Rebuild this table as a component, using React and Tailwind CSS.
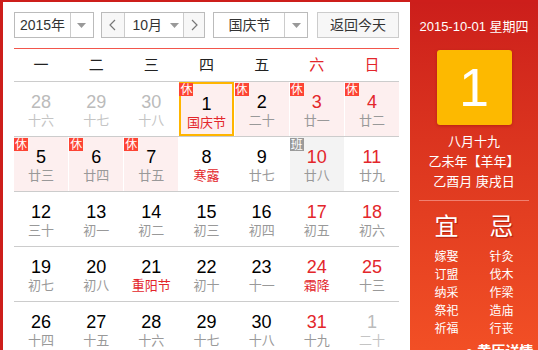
import React from "react";

const FONT = { fontFamily: '"Liberation Sans", Arial, "Noto Sans CJK SC", sans-serif' };

// d: day, l: lunar/holiday text, o: other month, w: weekend, h: holiday name, b: badge
const rows = [
  [
    { d: 28, l: "十六", o: true },
    { d: 29, l: "十七", o: true },
    { d: 30, l: "十八", o: true },
    { d: 1, l: "国庆节", h: true, b: "休", sel: true },
    { d: 2, l: "二十", b: "休" },
    { d: 3, l: "廿一", b: "休", w: true },
    { d: 4, l: "廿二", b: "休", w: true },
  ],
  [
    { d: 5, l: "廿三", b: "休" },
    { d: 6, l: "廿四", b: "休" },
    { d: 7, l: "廿五", b: "休" },
    { d: 8, l: "寒露", h: true },
    { d: 9, l: "廿七" },
    { d: 10, l: "廿八", b: "班", w: true },
    { d: 11, l: "廿九", w: true },
  ],
  [
    { d: 12, l: "三十" },
    { d: 13, l: "初一" },
    { d: 14, l: "初二" },
    { d: 15, l: "初三" },
    { d: 16, l: "初四" },
    { d: 17, l: "初五", w: true },
    { d: 18, l: "初六", w: true },
  ],
  [
    { d: 19, l: "初七" },
    { d: 20, l: "初八" },
    { d: 21, l: "重阳节", h: true },
    { d: 22, l: "初十" },
    { d: 23, l: "十一" },
    { d: 24, l: "霜降", h: true, w: true },
    { d: 25, l: "十三", w: true },
  ],
  [
    { d: 26, l: "十四" },
    { d: 27, l: "十五" },
    { d: 28, l: "十六" },
    { d: 29, l: "十七" },
    { d: 30, l: "十八" },
    { d: 31, l: "十九", w: true },
    { d: 1, l: "二十", o: true },
  ],
];

const weekdays = ["一", "二", "三", "四", "五", "六", "日"];
const yi = ["嫁娶", "订盟", "纳采", "祭祀", "祈福"];
const ji = ["针灸", "伐木", "作梁", "造庙", "行丧"];

const Caret = () => (
  <svg width="9" height="5" viewBox="0 0 9 5">
    <path d="M0 0h9L4.5 5z" fill="#999" />
  </svg>
);

const Chevron = ({ left }) => (
  <svg width="7" height="12" viewBox="0 0 7 12">
    <path
      d={left ? "M6 1L1 6l5 5" : "M1 1l5 5-5 5"}
      fill="none"
      stroke="#777"
      strokeWidth="1.2"
    />
  </svg>
);

const Cell = ({ c }) => {
  let bg = "";
  if (c.b === "休") bg = "bg-[#fdefef]";
  if (c.b === "班") bg = "bg-[#f3f3f3]";

  let numColor = "text-black";
  if (c.w) numColor = "text-[#e3262b]";
  if (c.o) numColor = "text-[#bbbbbb]";

  let lunarColor = "text-[#999999]";
  if (c.h) lunarColor = "text-[#e3262b]";
  if (c.o) lunarColor = "text-[#c4c4c4]";

  return (
    <div
      className={`relative h-[54px] flex flex-col items-center pt-[10px] ${bg} ${
        c.sel ? "border-2 border-[#ffb500] pt-[8px]" : ""
      }`}
    >
      {c.b && (
        <span
          className={`absolute ${c.sel ? "-top-[1px] -left-[2px]" : "top-[1px] left-0"} w-[14px] h-[13px] flex items-center justify-center text-[12px] leading-none text-white ${
            c.b === "休" ? "bg-[#fd4434]" : "bg-[#9a9a9a]"
          }`}
        >
          {c.b}
        </span>
      )}
      <span className={`text-[18px] leading-[20px] ${numColor}`}>{c.d}</span>
      <span className={`text-[13px] leading-[18px] ${lunarColor}`}>{c.l}</span>
    </div>
  );
};

export default function App() {
  return (
    <div
      className="w-[538px] h-[350px] overflow-hidden flex bg-[#cd1e1b] pl-[3px] pt-[2px]"
      style={FONT}
    >
      {/* 左侧日历 */}
      <div className="w-[407px] shrink-0 bg-white px-[11px] pt-[10px]">
        {/* 控制栏 */}
        <div className="flex items-center h-[26px] text-[14px] text-[#333]">
          <div className="w-[80px] h-[26px] flex border border-[#bbbbbb]">
            <span className="w-[55px] flex items-center justify-center">2015年</span>
            <span className="flex-1 border-l border-[#cccccc] flex items-center justify-center">
              <Caret />
            </span>
          </div>
          <div className="ml-[7px] w-[105px] h-[26px] flex border border-[#bbbbbb]">
            <span className="w-[22px] bg-[#f7f7f7] flex items-center justify-center">
              <Chevron left />
            </span>
            <span className="w-[60px] border-x border-[#cccccc] flex items-center justify-center gap-[8px] pl-[4px]">
              10月 <Caret />
            </span>
            <span className="flex-1 bg-[#f7f7f7] flex items-center justify-center">
              <Chevron />
            </span>
          </div>
          <div className="ml-[8px] w-[95px] h-[26px] flex border border-[#bbbbbb]">
            <span className="w-[70px] flex items-center justify-center">国庆节</span>
            <span className="flex-1 border-l border-[#cccccc] flex items-center justify-center">
              <Caret />
            </span>
          </div>
          <button className="ml-[9px] w-[82px] h-[26px] border border-[#cccccc] bg-[#f7f7f7] text-[14px] text-[#333]">
            返回今天
          </button>
        </div>

        {/* 星期 */}
        <div className="mt-[10px] border-t border-[#f2564c] grid grid-cols-7 gap-x-px h-[33px] items-center text-[15px] text-[#222]">
          {weekdays.map((w, i) => (
            <span key={w} className={`text-center ${i > 4 ? "text-[#e3262b]" : ""}`}>
              {w}
            </span>
          ))}
        </div>

        {/* 日期 */}
        {rows.map((row, ri) => (
          <div key={ri} className="border-t border-[#cccccc] grid grid-cols-7 gap-x-px">
            {row.map((c, ci) => (
              <Cell key={ci} c={c} />
            ))}
          </div>
        ))}
      </div>

      {/* 右侧黄历 */}
      <div className="w-[128px] shrink-0 bg-gradient-to-b from-[#cc1e1b] to-[#f24f25] text-white flex flex-col items-center pt-[15px] [&>*]:shrink-0">
        <div className="text-[13px] leading-[20px]">2015-10-01 星期四</div>
        <div className="mt-[13px] w-[75px] h-[75px] rounded-[3px] bg-[#fdb900] shadow-[0_1px_3px_rgba(120,0,0,0.35)] flex items-center justify-center text-[54px] leading-none pb-[2px]">
          1
        </div>
        <div className="mt-[7px] text-[13px] leading-[20px] text-center">
          <div>八月十九</div>
          <div>乙未年【羊年】</div>
          <div>乙酉月 庚戌日</div>
        </div>
        <div className="mt-[8px] w-[110px] border-t border-[#f08070]" />
        <div className="w-[110px] flex">
          {[["宜", yi], ["忌", ji]].map(([t, list]) => (
            <div key={t} className="w-1/2 flex flex-col items-center">
              <div className="mt-[12px] text-[24px] leading-[28px] [text-shadow:1px_1px_1px_rgba(120,0,0,0.5)]">
                {t}
              </div>
              <div className="mt-[7px] text-[12px] leading-[18px] text-center">
                {list.map((x) => (
                  <div key={x}>{x}</div>
                ))}
              </div>
            </div>
          ))}
        </div>
        <div className="mt-[4px] self-start pl-[55px] text-[14px] leading-[18px] font-bold whitespace-nowrap">
          ● 黄历详情
        </div>
      </div>
    </div>
  );
}
